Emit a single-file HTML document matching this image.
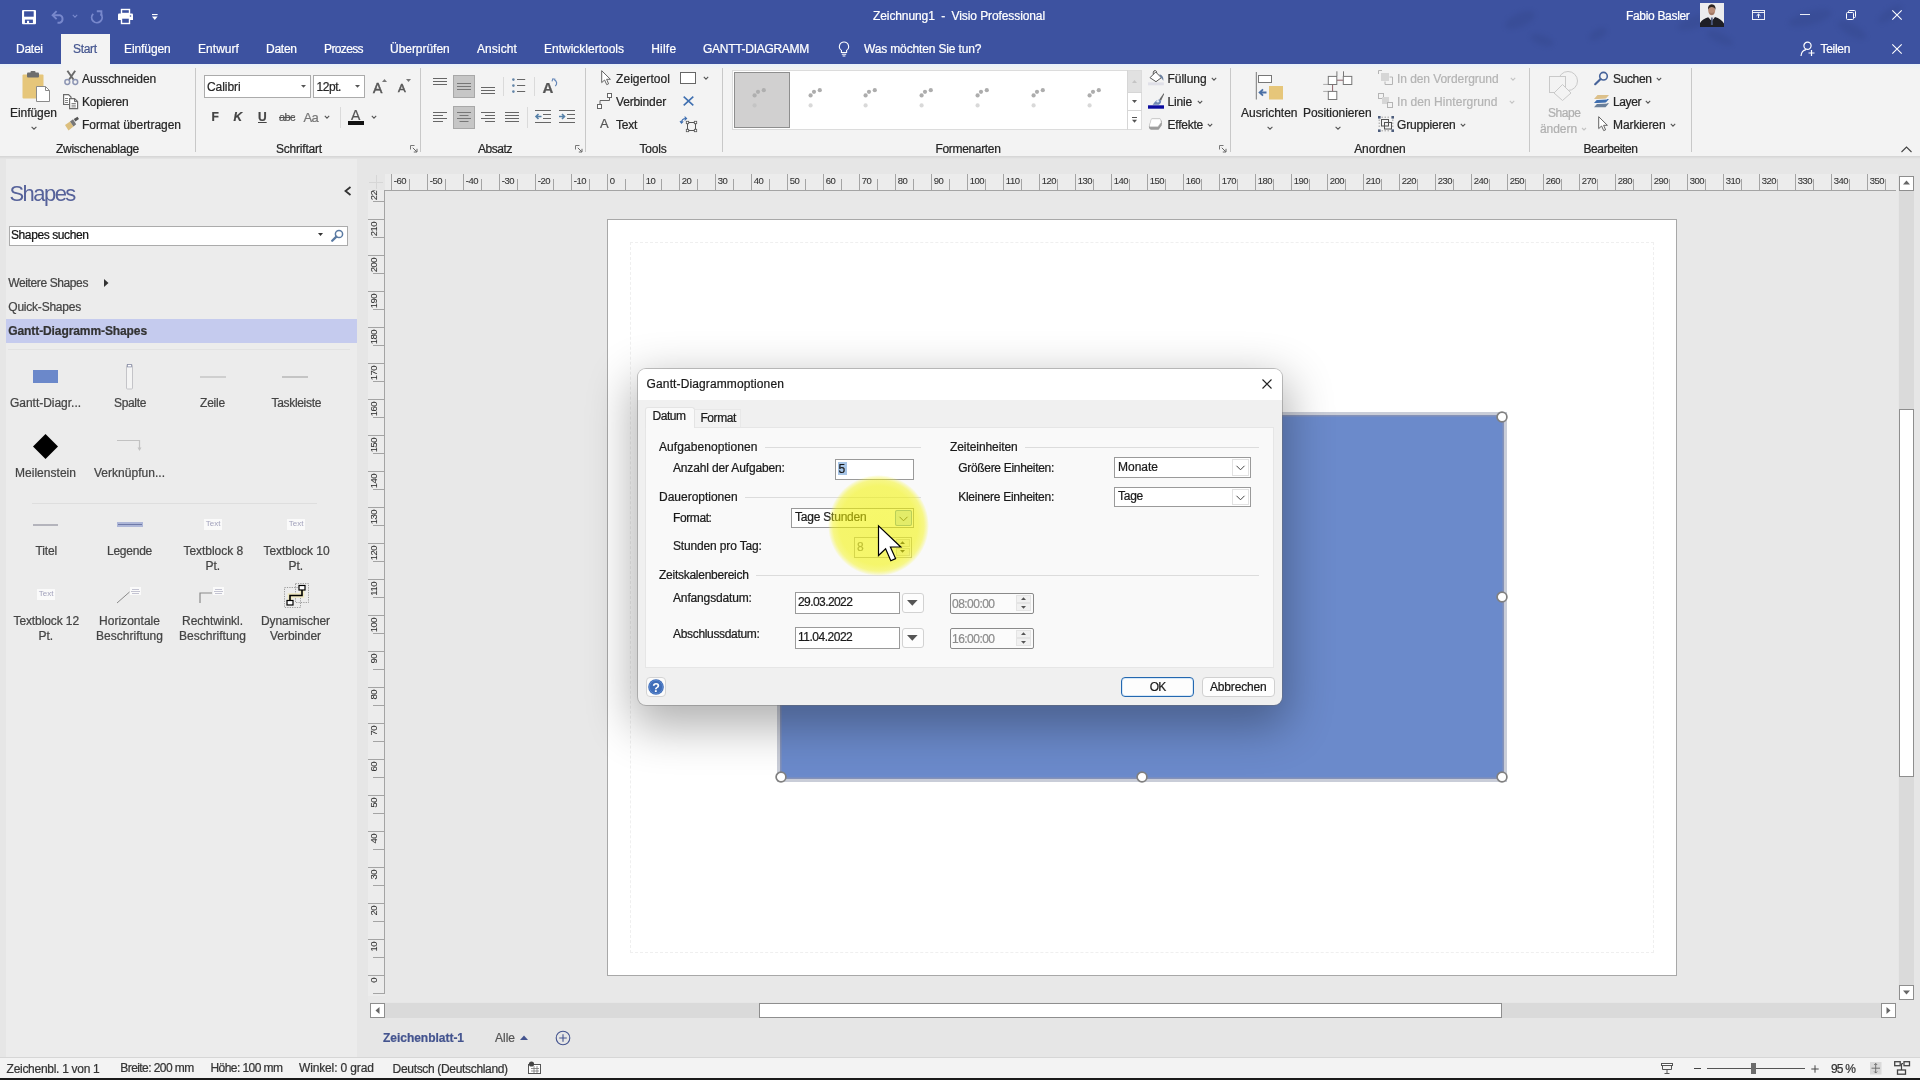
<!DOCTYPE html>
<html><head><meta charset="utf-8"><title>Visio</title>
<style>
html,body{margin:0;padding:0;background:#e6e6e6;}
body{width:1920px;height:1080px;overflow:hidden;position:relative;font-family:"Liberation Sans",sans-serif;}
.a{position:absolute;display:block;}
.t{position:absolute;white-space:pre;display:block;-webkit-text-stroke:0.22px;}
svg{overflow:visible;}
#root{position:absolute;left:0;top:0;width:1920px;height:1080px;overflow:hidden;will-change:transform;}
</style></head><body>
<div id="root">
<div class="a" style="left:0px;top:0px;width:1920px;height:64px;background:#3d52a0;"></div>
<svg class="a" style="left:1480px;top:0px;" width="440" height="64" viewBox="0 0 440 64">
<g fill="#34478c" opacity="0.4" style="filter:blur(2.5px)">
<ellipse cx="40" cy="20" rx="16" ry="7" transform="rotate(-25 40 20)"/>
<ellipse cx="62" cy="40" rx="12" ry="5" transform="rotate(20 62 40)"/>
<ellipse cx="118" cy="34" rx="10" ry="5" transform="rotate(-30 118 34)"/>
<ellipse cx="215" cy="22" rx="18" ry="6" transform="rotate(-20 215 22)"/>
<ellipse cx="240" cy="38" rx="14" ry="5" transform="rotate(25 240 38)"/>
<ellipse cx="330" cy="18" rx="22" ry="7" transform="rotate(-15 330 18)"/>
<ellipse cx="372" cy="30" rx="16" ry="6" transform="rotate(30 372 30)"/>
<ellipse cx="410" cy="14" rx="14" ry="5" transform="rotate(-35 410 14)"/>
</g></svg>
<div class="a" style="left:0px;top:64px;width:1920px;height:92px;background:#f3f3f3;"></div>
<div class="a" style="left:0px;top:64px;width:1920px;height:5px;background:linear-gradient(#e8f0fa,#f3f3f3);"></div>
<div class="a" style="left:61px;top:34px;width:49px;height:36px;background:#f3f3f3;"></div>
<div class="a" style="left:0px;top:156px;width:1920px;height:3px;background:linear-gradient(#d4d4d4,#e6e6e6);"></div>
<svg class="a" style="left:22px;top:10px;" width="14" height="14.5" viewBox="0 0 14 14.5"><rect x="0" y="0" width="14" height="14.200" rx="1" fill="#ffffff"/><rect x="2.1" y="1.300" width="9.600" height="5.400" fill="#3d52a0"/><rect x="2.9" y="9.600" width="8" height="3.400" fill="#3d52a0"/><rect x="5" y="10.800" width="2.100" height="2.2" fill="#ffffff"/></svg>
<svg class="a" style="left:51px;top:10px;" width="15" height="14" viewBox="0 0 15 14"><path d="M2 5.2 H8.800 A4 4 0 0 1 8.8 12.800 H6.5" fill="none" stroke="#7888cc" stroke-width="1.9"/><path d="M5.600 1.200 L1.600 5.2 L5.6 9.200" fill="none" stroke="#7888cc" stroke-width="1.9"/></svg>
<svg class="a" style="left:71px;top:13.0px;" width="8" height="6" viewBox="0 0 8 6"><path d="M1.7999999999999998 1.9 L4 4.1 L6.2 1.9" fill="none" stroke="#7888cc" stroke-width="1.1"/></svg>
<svg class="a" style="left:90px;top:10px;" width="14" height="14" viewBox="0 0 14 14"><path d="M10.800 4 A5.2 5.200 0 1 1 3.200 3.8" fill="none" stroke="#7888cc" stroke-width="1.9"/><path d="M6.800 1.200 H11.4 V5.800" fill="none" stroke="#7888cc" stroke-width="1.9"/></svg>
<svg class="a" style="left:117px;top:8px;" width="17" height="17" viewBox="0 0 17 17"><rect x="4.5" y="1.5" width="8" height="4" fill="none" stroke="#ffffff" stroke-width="1.4"/><path d="M1 6.5 Q1 5.5 2 5.5 H15 Q16 5.5 16 6.5 V12 H1 Z" fill="#ffffff"/><rect x="4.5" y="10" width="8" height="5.5" fill="#3d52a0" stroke="#ffffff" stroke-width="1.4"/><circle cx="13.5" cy="8" r="0.8" fill="#3d52a0"/></svg>
<svg class="a" style="left:151.5px;top:14px;" width="6" height="7" viewBox="0 0 6 7"><rect x="0" y="0" width="5.600" height="1.1" fill="#ffffff"/><path d="M0 2.600 H5.600 L2.800 5.900 Z" fill="#ffffff"/></svg>
<span class="t" style="left:873.0px;top:8.0px;font-size:12px;line-height:16px;color:#fff;letter-spacing:-0.097px;">Zeichnung1  -  Visio Professional</span>
<span class="t" style="left:1626.0px;top:8.0px;font-size:12px;line-height:16px;color:#fff;letter-spacing:-0.322px;">Fabio Basler</span>
<svg class="a" style="left:1700px;top:3px;" width="24" height="24" viewBox="0 0 24 24"><rect width="24" height="24" fill="#ececee"/>
<path d="M0 24 V20 Q2.500 15.800 8.200 14.200 L11.800 18 L15 14 Q21 15.500 24 20.500 V24 Z" fill="#1f1f26"/>
<path d="M9 13.600 L11.800 18.500 L14.400 13.600 Z" fill="#e4e4ea"/>
<path d="M11.200 14.500 H12.600 L13 22 H10.800 Z" fill="#4a5678"/>
<ellipse cx="11.700" cy="7.600" rx="3.500" ry="4.700" fill="#b98d78"/>
<path d="M8 7 Q7.600 1.400 11.800 1.300 Q16 1.400 15.500 7 Q14.600 4 11.800 4 Q9 4 8 7 Z" fill="#2e2622"/>
<path d="M9.200 9 Q11.700 11 14.200 9 L13.800 11 Q11.700 13.200 9.700 11 Z" fill="#8f6a5a" opacity="0.6"/></svg>
<svg class="a" style="left:1752px;top:10px;" width="13" height="10" viewBox="0 0 13 10"><rect x="0.500" y="0.500" width="12" height="9" fill="none" stroke="#ffffff" stroke-width="1" opacity="0.900"/><path d="M0.500 2.500 H12.500" stroke="#ffffff" stroke-width="1" opacity="0.900"/><path d="M6.500 8 V4.200 M4.600 5.800 L6.500 4 L8.400 5.800" fill="none" stroke="#ffffff" stroke-width="1"/></svg>
<div class="a" style="left:1800px;top:14px;width:10px;height:1px;background:rgba(255,255,255,0.9);"></div>
<svg class="a" style="left:1846px;top:10px;" width="10" height="10" viewBox="0 0 10 10"><rect x="0.500" y="2.500" width="7" height="7" rx="1" fill="none" stroke="#ffffff" stroke-width="1"/><path d="M2.500 2.500 V1.500 Q2.500 0.500 3.500 0.500 H8.500 Q9.500 0.500 9.500 1.500 V6.500 Q9.500 7.500 8.500 7.500 H7.500" fill="none" stroke="#ffffff" stroke-width="1"/></svg>
<svg class="a" style="left:1892px;top:10px;" width="10" height="10" viewBox="0 0 10 10"><path d="M0.300 0.300 L9.700 9.700 M9.700 0.300 L0.300 9.700" stroke="#ffffff" stroke-width="1.100"/></svg>
<svg class="a" style="left:1892px;top:43.5px;" width="10" height="10" viewBox="0 0 10 10"><path d="M0.300 0.300 L9.700 9.700 M9.700 0.300 L0.300 9.700" stroke="#ffffff" stroke-width="1.100"/></svg>
<svg class="a" style="left:1800px;top:41px;" width="16" height="16" viewBox="0 0 16 16"><circle cx="7.5" cy="4.8" r="3.6" fill="none" stroke="#ffffff" stroke-width="1.2"/><path d="M1 15 Q1.5 9.5 6 8.6" fill="none" stroke="#ffffff" stroke-width="1.2"/><path d="M11.5 9 V15 M8.5 12 H14.5" stroke="#ffffff" stroke-width="1.2"/></svg>
<span class="t" style="left:1820.5px;top:41.0px;font-size:12px;line-height:16px;color:#fff;letter-spacing:-0.309px;">Teilen</span>
<div class="a" style="left:61px;top:34px;width:49px;height:30px;background:#f3f3f3;"></div>
<span class="t" style="left:16.0px;top:41.0px;font-size:12px;line-height:16px;color:#fff;letter-spacing:-0.263px;">Datei</span>
<span class="t" style="left:73.0px;top:41.0px;font-size:12px;line-height:16px;color:#44558f;letter-spacing:-0.328px;">Start</span>
<span class="t" style="left:124.0px;top:41.0px;font-size:12px;line-height:16px;color:#fff;letter-spacing:-0.084px;">Einfügen</span>
<span class="t" style="left:198.0px;top:41.0px;font-size:12px;line-height:16px;color:#fff;letter-spacing:0.045px;">Entwurf</span>
<span class="t" style="left:266.0px;top:41.0px;font-size:12px;line-height:16px;color:#fff;letter-spacing:-0.264px;">Daten</span>
<span class="t" style="left:324.0px;top:41.0px;font-size:12px;line-height:16px;color:#fff;letter-spacing:-0.621px;">Prozess</span>
<span class="t" style="left:390.0px;top:41.0px;font-size:12px;line-height:16px;color:#fff;letter-spacing:-0.034px;">Überprüfen</span>
<span class="t" style="left:477.0px;top:41.0px;font-size:12px;line-height:16px;color:#fff;letter-spacing:0.093px;">Ansicht</span>
<span class="t" style="left:544.0px;top:41.0px;font-size:12px;line-height:16px;color:#fff;letter-spacing:-0.002px;">Entwicklertools</span>
<span class="t" style="left:651.2px;top:41.0px;font-size:12px;line-height:16px;color:#fff;letter-spacing:0.219px;">Hilfe</span>
<span class="t" style="left:703.0px;top:41.0px;font-size:12px;line-height:16px;color:#fff;letter-spacing:-0.286px;">GANTT-DIAGRAMM</span>
<span class="t" style="left:864.0px;top:41.0px;font-size:12px;line-height:16px;color:#fff;letter-spacing:-0.154px;">Was möchten Sie tun?</span>
<svg class="a" style="left:838px;top:41px;" width="12" height="16" viewBox="0 0 12 16"><path d="M6 1 A4.6 4.6 0 0 1 8.6 9.4 V11.5 H3.4 V9.4 A4.6 4.6 0 0 1 6 1 Z" fill="none" stroke="#ffffff" stroke-width="1.1"/><path d="M3.8 13.3 H8.2 M4.6 15 H7.4" stroke="#ffffff" stroke-width="1.1"/></svg>
<svg class="a" style="left:22px;top:71px;" width="29" height="31" viewBox="0 0 29 31"><rect x="0.5" y="3.5" width="21" height="24" rx="1" fill="#e6c67a"/>
<rect x="5" y="1.5" width="12" height="5" rx="1" fill="#6e6e6e"/><rect x="8.5" y="0" width="5" height="3" rx="1" fill="#6e6e6e"/>
<path d="M14.5 15.5 H23.5 L27.5 19.5 V30.5 H14.5 Z" fill="#fff" stroke="#8a8a8a" stroke-width="1"/>
<path d="M23.5 15.5 V19.5 H27.5" fill="none" stroke="#8a8a8a" stroke-width="1"/></svg>
<span class="t" style="left:10.0px;top:104.7px;font-size:12px;line-height:16px;color:#262626;letter-spacing:-0.047px;">Einfügen</span>
<svg class="a" style="left:30px;top:125.0px;" width="8" height="6" viewBox="0 0 8 6"><path d="M1.6 1.8 L4 4.2 L6.4 1.8" fill="none" stroke="#555" stroke-width="1.1"/></svg>
<svg class="a" style="left:64px;top:70px;" width="15" height="15" viewBox="0 0 15 15"><path d="M3.400 0.800 L9.800 10 M11.200 0.800 L4.800 10" stroke="#6a6a6a" stroke-width="1.900" fill="none"/>
<circle cx="3.300" cy="12" r="2.400" fill="none" stroke="#8d96b4" stroke-width="1.500"/><circle cx="11.300" cy="12" r="2.400" fill="none" stroke="#8d96b4" stroke-width="1.500"/></svg>
<span class="t" style="left:82.0px;top:70.5px;font-size:12px;line-height:16px;color:#262626;letter-spacing:-0.116px;">Ausschneiden</span>
<svg class="a" style="left:63px;top:94px;" width="16" height="16" viewBox="0 0 16 16"><path d="M0.600 0.600 H5.500 L8 3 V10.500 H0.600 Z" fill="#fff" stroke="#6a6a6a" stroke-width="1.200"/>
<path d="M2 4.500 H5 M2 6.500 H5 M2 8.500 H5" stroke="#777" stroke-width="0.900"/>
<path d="M6.600 4.600 H11.500 L14.600 7.600 V14.600 H6.600 Z" fill="#fff" stroke="#6a6a6a" stroke-width="1.200"/><path d="M11.500 4.600 V7.600 H14.600" fill="none" stroke="#6a6a6a" stroke-width="1"/>
<path d="M8.500 9.500 H12.800 M8.500 11.200 H12.800 M8.500 12.900 H12.800" stroke="#777" stroke-width="0.900"/></svg>
<span class="t" style="left:82.0px;top:93.5px;font-size:12px;line-height:16px;color:#262626;letter-spacing:-0.192px;">Kopieren</span>
<svg class="a" style="left:64px;top:116px;" width="16" height="16" viewBox="0 0 16 16"><path d="M1 9 L6 5.5 L9.5 10.5 L4.5 14.5 Z" fill="#dcbf7e"/>
<path d="M6 5.5 L9 3.3 L12.2 8.3 L9.5 10.5 Z" fill="#777"/><path d="M9.8 3 L13.5 0.8 L15 3 L11.3 5.6 Z" fill="#555"/></svg>
<span class="t" style="left:82.0px;top:117.0px;font-size:12px;line-height:16px;color:#262626;letter-spacing:-0.022px;">Format übertragen</span>
<span class="t" style="left:56.0px;top:140.5px;font-size:12px;line-height:16px;color:#262626;letter-spacing:-0.266px;">Zwischenablage</span>
<div class="a" style="left:195px;top:68px;width:1px;height:84px;background:#c8c8c8;"></div>
<div class="a" style="left:204px;top:75px;width:107px;height:23px;background:#fff;border:1px solid #ababab;box-sizing:border-box;"></div>
<span class="t" style="left:207.0px;top:79.0px;font-size:12px;line-height:16px;color:#262626;letter-spacing:-0.073px;">Calibri</span>
<svg class="a" style="left:300.8px;top:85.3px;" width="5" height="3" viewBox="0 0 5 3"><path d="M0 0 H5 L2.500 2.800 Z" fill="#555"/></svg>
<div class="a" style="left:313px;top:75px;width:52px;height:23px;background:#fff;border:1px solid #ababab;box-sizing:border-box;"></div>
<span class="t" style="left:316.5px;top:79.0px;font-size:12px;line-height:16px;color:#262626;letter-spacing:-0.438px;">12pt.</span>
<svg class="a" style="left:355.1px;top:85.3px;" width="5" height="3" viewBox="0 0 5 3"><path d="M0 0 H5 L2.500 2.800 Z" fill="#555"/></svg>
<span class="t" style="left:373.0px;top:78.5px;font-size:14px;line-height:18px;color:#555;-webkit-text-stroke:0.500px;">A</span>
<svg class="a" style="left:382px;top:79px;" width="5" height="3" viewBox="0 0 5 3"><path d="M0 3 H5 L2.5 0 Z" fill="#777"/></svg>
<span class="t" style="left:398.0px;top:80.8px;font-size:11.5px;line-height:15.5px;color:#555;-webkit-text-stroke:0.500px;">A</span>
<svg class="a" style="left:406px;top:79px;" width="5" height="3" viewBox="0 0 5 3"><path d="M0 0 H5 L2.5 3 Z" fill="#777"/></svg>
<span class="t" style="left:211.5px;top:109.0px;font-size:12px;line-height:16px;color:#444;font-weight:bold;">F</span>
<span class="t" style="left:233.5px;top:109.0px;font-size:12px;line-height:16px;color:#444;font-weight:bold;font-style:italic;">K</span>
<span class="t" style="left:258.0px;top:109.0px;font-size:12px;line-height:16px;color:#444;font-weight:bold;text-decoration:underline;">U</span>
<span class="t" style="left:279.0px;top:109.5px;font-size:11px;line-height:15px;color:#555;letter-spacing:-0.578px;text-decoration:line-through;">abc</span>
<span class="t" style="left:303.5px;top:108.5px;font-size:13px;line-height:17px;color:#777;letter-spacing:-0.701px;">Aa</span>
<svg class="a" style="left:323px;top:114.0px;" width="8" height="6" viewBox="0 0 8 6"><path d="M1.7999999999999998 1.9 L4 4.1 L6.2 1.9" fill="none" stroke="#555" stroke-width="1.1"/></svg>
<div class="a" style="left:340px;top:107px;width:1px;height:21px;background:#dadada;"></div>
<span class="t" style="left:351.0px;top:106.0px;font-size:14px;line-height:18px;color:#555;">A</span>
<div class="a" style="left:348px;top:121px;width:16px;height:4px;background:#111;"></div>
<svg class="a" style="left:370px;top:114.0px;" width="8" height="6" viewBox="0 0 8 6"><path d="M1.7999999999999998 1.9 L4 4.1 L6.2 1.9" fill="none" stroke="#555" stroke-width="1.1"/></svg>
<span class="t" style="left:276.0px;top:140.5px;font-size:12px;line-height:16px;color:#262626;letter-spacing:-0.201px;">Schriftart</span>
<svg class="a" style="left:409.5px;top:144.5px;" width="8" height="8" viewBox="0 0 8 8"><path d="M0.500 4.500 V0.500 H4.500" fill="none" stroke="#777" stroke-width="1"/><path d="M2.800 2.800 L6.800 6.800 M7 3.800 V7 H3.800" fill="none" stroke="#666" stroke-width="1"/></svg>
<div class="a" style="left:420px;top:68px;width:1px;height:84px;background:#c8c8c8;"></div>
<svg class="a" style="left:433px;top:78px;" width="14" height="7" viewBox="0 0 14 7"><path d="M0.0 0.5 H14.0 M0.0 3.5 H14.0 M0.0 6.5 H14.0 " stroke="#666" stroke-width="1" fill="none"/></svg>
<div class="a" style="left:453px;top:75px;width:22px;height:23px;background:#c6c6c6;border:1px solid #a8a8a8;box-sizing:border-box;"></div>
<svg class="a" style="left:457px;top:83px;" width="14" height="7" viewBox="0 0 14 7"><path d="M0.0 0.5 H14.0 M0.0 3.5 H14.0 M0.0 6.5 H14.0 " stroke="#777" stroke-width="1" fill="none"/></svg>
<svg class="a" style="left:481px;top:87px;" width="14" height="7" viewBox="0 0 14 7"><path d="M0.0 0.5 H14.0 M0.0 3.5 H14.0 M0.0 6.5 H14.0 " stroke="#666" stroke-width="1" fill="none"/></svg>
<div class="a" style="left:503px;top:77px;width:1px;height:19px;background:#dadada;"></div>
<svg class="a" style="left:511px;top:79px;" width="15" height="14" viewBox="0 0 15 14"><path d="M6 0.500 H14.200 M6 6.500 H14.200 M6 12.500 H14.200" stroke="#666" stroke-width="1"/><circle cx="2.400" cy="0.600" r="1.300" fill="#6486a8"/><circle cx="2.400" cy="6.600" r="1.300" fill="#6486a8"/><circle cx="2.400" cy="12.600" r="1.300" fill="#6486a8"/></svg>
<div class="a" style="left:534px;top:77px;width:1px;height:19px;background:#dadada;"></div>
<span class="t" style="left:542.5px;top:78.0px;font-size:15px;line-height:19px;color:#555;font-weight:bold;">A</span>
<svg class="a" style="left:551px;top:78px;" width="7" height="9" viewBox="0 0 7 9"><path d="M4.300 8.200 Q7.600 4.200 3 1.600" fill="none" stroke="#6486b8" stroke-width="1.200"/><path d="M1 3.300 L1.800 0.800 L4.400 1.300" fill="none" stroke="#6486b8" stroke-width="1.100"/></svg>
<svg class="a" style="left:433px;top:112px;" width="14" height="10" viewBox="0 0 14 10"><path d="M0 0.5 H14 M0 3.5 H10 M0 6.5 H14 M0 9.5 H10 " stroke="#666" stroke-width="1" fill="none"/></svg>
<div class="a" style="left:453px;top:106px;width:22px;height:23px;background:#c6c6c6;border:1px solid #a8a8a8;box-sizing:border-box;"></div>
<svg class="a" style="left:457px;top:112px;" width="14" height="10" viewBox="0 0 14 10"><path d="M0.0 0.5 H14.0 M2.5 3.5 H11.5 M0.0 6.5 H14.0 M2.5 9.5 H11.5 " stroke="#777" stroke-width="1" fill="none"/></svg>
<svg class="a" style="left:481px;top:112px;" width="14" height="10" viewBox="0 0 14 10"><path d="M0 0.5 H14 M4 3.5 H14 M0 6.5 H14 M4 9.5 H14 " stroke="#666" stroke-width="1" fill="none"/></svg>
<svg class="a" style="left:505px;top:112px;" width="14" height="10" viewBox="0 0 14 10"><path d="M0.0 0.5 H14.0 M0.0 3.5 H14.0 M0.0 6.5 H14.0 M0.0 9.5 H14.0 " stroke="#666" stroke-width="1" fill="none"/></svg>
<div class="a" style="left:527px;top:107px;width:1px;height:21px;background:#dadada;"></div>
<svg class="a" style="left:535px;top:110px;" width="16" height="14" viewBox="0 0 16 14"><path d="M0 0.5 H16 M8 4.5 H16 M8 8.5 H16 M0 12.5 H16" stroke="#666" stroke-width="1"/><path d="M6.5 6.5 H1 M3.5 4 L1 6.5 L3.5 9" fill="none" stroke="#5580a8" stroke-width="1.600"/></svg>
<svg class="a" style="left:559px;top:110px;" width="16" height="14" viewBox="0 0 16 14"><path d="M0 0.5 H16 M8 4.5 H16 M8 8.5 H16 M0 12.5 H16" stroke="#666" stroke-width="1"/><path d="M0 6.5 H5.5 M3 4 L5.5 6.5 L3 9" fill="none" stroke="#5580a8" stroke-width="1.600"/></svg>
<span class="t" style="left:478.0px;top:140.5px;font-size:12px;line-height:16px;color:#262626;letter-spacing:-0.448px;">Absatz</span>
<svg class="a" style="left:574.5px;top:144.5px;" width="8" height="8" viewBox="0 0 8 8"><path d="M0.500 4.500 V0.500 H4.500" fill="none" stroke="#777" stroke-width="1"/><path d="M2.800 2.800 L6.800 6.800 M7 3.800 V7 H3.800" fill="none" stroke="#666" stroke-width="1"/></svg>
<div class="a" style="left:585px;top:68px;width:1px;height:84px;background:#c8c8c8;"></div>
<svg class="a" style="left:601px;top:70px;" width="10.0" height="16.0" viewBox="0 0 10 16"><path d="M0.7 0.7 V12.6 L3.6 10 L5.7 14.6 L7.6 13.8 L5.6 9.3 H9.4 Z" fill="#fff" stroke="#555" stroke-width="0.9" stroke-linejoin="round"/></svg>
<span class="t" style="left:616.0px;top:70.5px;font-size:12px;line-height:16px;color:#262626;letter-spacing:0.064px;">Zeigertool</span>
<div class="a" style="left:680px;top:72px;width:16px;height:12px;background:#fff;border:1px solid #666;box-sizing:border-box;"></div>
<svg class="a" style="left:702px;top:75.0px;" width="8" height="6" viewBox="0 0 8 6"><path d="M1.7999999999999998 1.9 L4 4.1 L6.2 1.9" fill="none" stroke="#555" stroke-width="1.1"/></svg>
<svg class="a" style="left:597px;top:93px;" width="16" height="16" viewBox="0 0 16 16"><path d="M3 11 V7.5 H12.5 V4.5" fill="none" stroke="#666" stroke-width="1"/><rect x="0.5" y="11.5" width="4" height="4" fill="#fff" stroke="#666"/><rect x="10.5" y="0.5" width="4" height="4" fill="#fff" stroke="#666"/></svg>
<span class="t" style="left:616.0px;top:93.5px;font-size:12px;line-height:16px;color:#262626;letter-spacing:-0.152px;">Verbinder</span>
<svg class="a" style="left:683px;top:96px;" width="11" height="10" viewBox="0 0 11 10"><path d="M0.7 0.7 L10.3 9.3 M10.3 0.7 L0.7 9.3" stroke="#3f6fb0" stroke-width="1.6"/></svg>
<span class="t" style="left:600.0px;top:115.0px;font-size:13px;line-height:17px;color:#555;">A</span>
<span class="t" style="left:616.0px;top:117.0px;font-size:12px;line-height:16px;color:#262626;letter-spacing:-0.252px;">Text</span>
<svg class="a" style="left:680px;top:116px;" width="17" height="16" viewBox="0 0 17 16"><rect x="7.5" y="6.5" width="8" height="8" fill="none" stroke="#555" stroke-width="1"/><rect x="6.3" y="5.3" width="2.4" height="2.4" fill="#fff" stroke="#555" stroke-width="0.8"/><rect x="14.3" y="5.3" width="2.4" height="2.4" fill="#fff" stroke="#555" stroke-width="0.8"/><rect x="6.3" y="13.3" width="2.4" height="2.4" fill="#fff" stroke="#555" stroke-width="0.8"/><rect x="14.3" y="13.3" width="2.4" height="2.4" fill="#fff" stroke="#555" stroke-width="0.8"/><path d="M1.5 7 Q1.5 2.5 6 2.5" fill="none" stroke="#3f6fb0" stroke-width="1.2"/><path d="M4.6 0.6 L6.6 2.5 L4.6 4.4" fill="none" stroke="#3f6fb0" stroke-width="1.1"/><path d="M0 5.2 L1.5 7.2 L3.2 5.4" fill="none" stroke="#3f6fb0" stroke-width="1.1"/></svg>
<span class="t" style="left:639.5px;top:140.5px;font-size:12px;line-height:16px;color:#262626;letter-spacing:-0.203px;">Tools</span>
<div class="a" style="left:722px;top:68px;width:1px;height:84px;background:#c8c8c8;"></div>
<div class="a" style="left:732px;top:70px;width:410px;height:60px;background:#fff;border:1px solid #dcdcdc;box-sizing:border-box;"></div>
<div class="a" style="left:734px;top:72px;width:56px;height:56px;background:#d1d0d0;border:1px solid #8e8e8e;box-sizing:border-box;"></div>
<svg class="a" style="left:751.5px;top:86px;" width="16" height="22" viewBox="0 0 16 22"><circle cx="2.600" cy="9.4" r="2.100" fill="#afafaf"/><circle cx="6" cy="5.800" r="2.100" fill="#afafaf"/><circle cx="11.800" cy="4.200" r="2.100" fill="#afafaf"/><circle cx="2.600" cy="19.400" r="2.100" fill="#c4c4c4"/></svg>
<svg class="a" style="left:807.5px;top:86px;" width="16" height="22" viewBox="0 0 16 22"><circle cx="2.600" cy="9.4" r="2.100" fill="#adadad"/><circle cx="6" cy="5.800" r="2.100" fill="#adadad"/><circle cx="11.800" cy="4.200" r="2.100" fill="#adadad"/><circle cx="2.600" cy="19.400" r="2.100" fill="#d9d9d9"/></svg>
<svg class="a" style="left:863px;top:86px;" width="16" height="22" viewBox="0 0 16 22"><circle cx="2.600" cy="9.4" r="2.100" fill="#adadad"/><circle cx="6" cy="5.800" r="2.100" fill="#adadad"/><circle cx="11.800" cy="4.200" r="2.100" fill="#adadad"/><circle cx="2.600" cy="19.400" r="2.100" fill="#d9d9d9"/></svg>
<svg class="a" style="left:919px;top:86px;" width="16" height="22" viewBox="0 0 16 22"><circle cx="2.600" cy="9.4" r="2.100" fill="#adadad"/><circle cx="6" cy="5.800" r="2.100" fill="#adadad"/><circle cx="11.800" cy="4.200" r="2.100" fill="#adadad"/><circle cx="2.600" cy="19.400" r="2.100" fill="#d9d9d9"/></svg>
<svg class="a" style="left:974.5px;top:86px;" width="16" height="22" viewBox="0 0 16 22"><circle cx="2.600" cy="9.4" r="2.100" fill="#adadad"/><circle cx="6" cy="5.800" r="2.100" fill="#adadad"/><circle cx="11.800" cy="4.200" r="2.100" fill="#adadad"/><circle cx="2.600" cy="19.400" r="2.100" fill="#d9d9d9"/></svg>
<svg class="a" style="left:1030.5px;top:86px;" width="16" height="22" viewBox="0 0 16 22"><circle cx="2.600" cy="9.4" r="2.100" fill="#adadad"/><circle cx="6" cy="5.800" r="2.100" fill="#adadad"/><circle cx="11.800" cy="4.200" r="2.100" fill="#adadad"/><circle cx="2.600" cy="19.400" r="2.100" fill="#d9d9d9"/></svg>
<svg class="a" style="left:1086.5px;top:86px;" width="16" height="22" viewBox="0 0 16 22"><circle cx="2.600" cy="9.4" r="2.100" fill="#adadad"/><circle cx="6" cy="5.800" r="2.100" fill="#adadad"/><circle cx="11.800" cy="4.200" r="2.100" fill="#adadad"/><circle cx="2.600" cy="19.400" r="2.100" fill="#d9d9d9"/></svg>
<div class="a" style="left:1127px;top:71px;width:14px;height:22px;background:#e1e1e1;"></div>
<div class="a" style="left:1127px;top:70px;width:1px;height:60px;background:#d6d6d6;"></div>
<div class="a" style="left:1127px;top:92px;width:15px;height:1px;background:#d6d6d6;"></div>
<div class="a" style="left:1127px;top:110px;width:15px;height:1px;background:#d6d6d6;"></div>
<svg class="a" style="left:1132px;top:80px;" width="5" height="3" viewBox="0 0 5 3"><path d="M0 3 H5 L2.5 0 Z" fill="#c4c4c4"/></svg>
<svg class="a" style="left:1132px;top:100px;" width="5" height="3" viewBox="0 0 5 3"><path d="M0 0 H5 L2.5 3 Z" fill="#555"/></svg>
<svg class="a" style="left:1132px;top:117px;" width="5" height="6" viewBox="0 0 5 6"><path d="M0 0.5 H5" stroke="#555" stroke-width="1"/><path d="M0 2.8 H5 L2.5 5.8 Z" fill="#555"/></svg>
<svg class="a" style="left:1148px;top:69px;" width="17" height="17" viewBox="0 0 17 17"><path d="M2 8.700 L7.700 3 L13.300 8.700 L8 12.700 Z" fill="#fff" stroke="#555" stroke-width="1"/><path d="M5.300 5.400 V3.200 Q5.600 1.400 7.400 1.600 Q8.800 1.900 8.700 3.800" fill="none" stroke="#555" stroke-width="1"/><path d="M11.400 5.200 Q15.800 6.200 15.400 11.800 Q13.400 8.800 12.300 7.900 Z" fill="#6a7f9f"/><rect x="0" y="13.400" width="15.800" height="2.900" fill="#e0e0e8"/></svg>
<span class="t" style="left:1167.5px;top:70.5px;font-size:12px;line-height:16px;color:#262626;letter-spacing:-0.051px;">Füllung</span>
<svg class="a" style="left:1210px;top:75.5px;" width="8" height="6" viewBox="0 0 8 6"><path d="M1.7999999999999998 1.9 L4 4.1 L6.2 1.9" fill="none" stroke="#555" stroke-width="1.1"/></svg>
<svg class="a" style="left:1148px;top:92px;" width="17" height="17" viewBox="0 0 17 17"><path d="M15.800 0.900 L11.300 7.600 L13 8.800 L16 2.600 Z" fill="#686868"/><path d="M11.300 7.400 Q8.400 7.600 6.800 10 L4.600 12.800 H11 Q13.600 10.800 13.200 8.700 Z" fill="#6f88b4"/><circle cx="9.800" cy="9.300" r="1.300" fill="#dfe8f6"/><rect x="0" y="13.300" width="16" height="3.400" fill="#0a0a9e"/></svg>
<span class="t" style="left:1167.5px;top:94.0px;font-size:12px;line-height:16px;color:#262626;letter-spacing:-0.171px;">Linie</span>
<svg class="a" style="left:1195.5px;top:99.0px;" width="8" height="6" viewBox="0 0 8 6"><path d="M1.7999999999999998 1.9 L4 4.1 L6.2 1.9" fill="none" stroke="#555" stroke-width="1.1"/></svg>
<svg class="a" style="left:1148px;top:117px;" width="17" height="15" viewBox="0 0 17 15"><path d="M1 9.200 L3 2.400 Q3.300 1.500 4.300 1.500 H12 Q14.800 4 13.600 8.600 L11 12.300 Q10.600 12.800 9.800 12.800 H3 Q0.600 12 1 9.200 Z" fill="#9c9c9c"/><path d="M3.200 2.600 Q3.500 1.800 4.400 1.800 H11.400 Q12.400 1.800 12.700 2.800 L13.100 5.200 L10.300 9.200 Q9.900 9.700 9.200 9.700 H2.400 Q1.200 9.500 1.500 8.400 Z" fill="#fff" stroke="#c4c4c4" stroke-width="0.500"/></svg>
<span class="t" style="left:1167.5px;top:116.5px;font-size:12px;line-height:16px;color:#262626;letter-spacing:-0.234px;">Effekte</span>
<svg class="a" style="left:1206px;top:121.5px;" width="8" height="6" viewBox="0 0 8 6"><path d="M1.7999999999999998 1.9 L4 4.1 L6.2 1.9" fill="none" stroke="#555" stroke-width="1.1"/></svg>
<span class="t" style="left:935.5px;top:140.5px;font-size:12px;line-height:16px;color:#262626;letter-spacing:-0.336px;">Formenarten</span>
<svg class="a" style="left:1219.0px;top:144.5px;" width="8" height="8" viewBox="0 0 8 8"><path d="M0.500 4.500 V0.500 H4.500" fill="none" stroke="#777" stroke-width="1"/><path d="M2.800 2.800 L6.800 6.800 M7 3.800 V7 H3.800" fill="none" stroke="#666" stroke-width="1"/></svg>
<div class="a" style="left:1230px;top:68px;width:1px;height:84px;background:#c8c8c8;"></div>
<svg class="a" style="left:1255px;top:72px;" width="29" height="28" viewBox="0 0 29 28"><path d="M1.300 0 V27.500" stroke="#777" stroke-width="1"/>
<rect x="3.5" y="3.5" width="13" height="7" fill="#fff" stroke="#777" stroke-width="1"/>
<rect x="14" y="14" width="14" height="13.5" fill="#e6c67a"/>
<path d="M11.5 20.5 H5 M8 17.3 L4.6 20.5 L8 23.7" fill="none" stroke="#4a6fa5" stroke-width="1.8"/></svg>
<span class="t" style="left:1241.0px;top:105.0px;font-size:12px;line-height:16px;color:#262626;letter-spacing:-0.020px;">Ausrichten</span>
<svg class="a" style="left:1266px;top:125.0px;" width="8" height="6" viewBox="0 0 8 6"><path d="M1.6 1.8 L4 4.2 L6.4 1.8" fill="none" stroke="#555" stroke-width="1.1"/></svg>
<svg class="a" style="left:1323px;top:72px;" width="30" height="29" viewBox="0 0 30 29"><path d="M13.900 -0.700 V4 M20.500 -0.700 V4" stroke="#777" stroke-width="1" fill="none"/>
<path d="M14 8.200 H20.500 M9.600 12.500 V19.500" stroke="#8f5f68" stroke-width="1" fill="none"/>
<path d="M0.200 12.400 H5 M0.200 19.400 H5" stroke="#a9a9a9" stroke-width="1"/>
<rect x="5.300" y="4.400" width="8.500" height="8.100" fill="#fff" stroke="#777"/><rect x="20.300" y="4.400" width="8.500" height="8.100" fill="#fff" stroke="#777"/><rect x="5.300" y="19.400" width="8.500" height="8.100" fill="#fff" stroke="#777"/></svg>
<span class="t" style="left:1303.0px;top:105.0px;font-size:12px;line-height:16px;color:#262626;letter-spacing:-0.067px;">Positionieren</span>
<svg class="a" style="left:1334px;top:125.0px;" width="8" height="6" viewBox="0 0 8 6"><path d="M1.6 1.8 L4 4.2 L6.4 1.8" fill="none" stroke="#555" stroke-width="1.1"/></svg>
<svg class="a" style="left:1378px;top:70px;" width="16" height="16" viewBox="0 0 16 16"><path d="M0.5 4 V0.5 H4" fill="none" stroke="#b4b4b4"/><rect x="3" y="3" width="8" height="8" fill="#d6d6d6"/><path d="M11.5 7 H14.5 V14.5 H7 V11.5" fill="none" stroke="#b4b4b4"/></svg>
<span class="t" style="left:1397.0px;top:70.5px;font-size:12px;line-height:16px;color:#b4b4b4;letter-spacing:-0.069px;">In den Vordergrund</span>
<svg class="a" style="left:1509px;top:75.5px;" width="8" height="6" viewBox="0 0 8 6"><path d="M1.7999999999999998 1.9 L4 4.1 L6.2 1.9" fill="none" stroke="#c4c4c4" stroke-width="1.1"/></svg>
<svg class="a" style="left:1378px;top:93px;" width="16" height="16" viewBox="0 0 16 16"><rect x="0.5" y="0.5" width="5" height="5" fill="none" stroke="#b4b4b4"/><rect x="4" y="4" width="7" height="7" fill="#d6d6d6"/><rect x="9.500" y="9.500" width="5" height="5" fill="#f3f3f3" stroke="#b4b4b4"/></svg>
<span class="t" style="left:1397.0px;top:94.0px;font-size:12px;line-height:16px;color:#b4b4b4;letter-spacing:0.061px;">In den Hintergrund</span>
<svg class="a" style="left:1508px;top:99.0px;" width="8" height="6" viewBox="0 0 8 6"><path d="M1.7999999999999998 1.9 L4 4.1 L6.2 1.9" fill="none" stroke="#c4c4c4" stroke-width="1.1"/></svg>
<svg class="a" style="left:1378px;top:116px;" width="17" height="16" viewBox="0 0 17 16"><path d="M3.500 1.200 H12.500 M3.500 14.800 H12.500 M1.200 3.500 V12.500 M14.800 3.500 V12.500" stroke="#8a8a8a" stroke-width="0.800" stroke-dasharray="1.500 1.500"/>
<rect x="3.500" y="3.500" width="7" height="6.500" fill="none" stroke="#555"/><rect x="6.500" y="6.500" width="7" height="6.500" fill="none" stroke="#555"/>
<g fill="#4d5d7c"><rect x="0" y="0" width="2.600" height="2.600"/><rect x="13.400" y="0" width="2.600" height="2.600"/><rect x="0" y="13.400" width="2.600" height="2.600"/><rect x="13.400" y="13.400" width="2.600" height="2.600"/></g></svg>
<span class="t" style="left:1397.0px;top:116.5px;font-size:12px;line-height:16px;color:#262626;letter-spacing:-0.154px;">Gruppieren</span>
<svg class="a" style="left:1459px;top:121.5px;" width="8" height="6" viewBox="0 0 8 6"><path d="M1.7999999999999998 1.9 L4 4.1 L6.2 1.9" fill="none" stroke="#555" stroke-width="1.1"/></svg>
<span class="t" style="left:1354.2px;top:140.5px;font-size:12px;line-height:16px;color:#262626;letter-spacing:-0.068px;">Anordnen</span>
<div class="a" style="left:1529px;top:68px;width:1px;height:84px;background:#c8c8c8;"></div>
<svg class="a" style="left:1548px;top:71px;" width="31" height="30" viewBox="0 0 31 30"><circle cx="20" cy="10" r="9.5" fill="none" stroke="#c9c9c9"/><rect x="1.5" y="5.5" width="16" height="16" fill="#f3f3f3" stroke="#c9c9c9"/><path d="M14.5 13.5 L23 22 L14.5 29.5 L6 22 Z" fill="#f3f3f3" stroke="#c9c9c9"/></svg>
<span class="t" style="left:1548.0px;top:105.0px;font-size:12px;line-height:16px;color:#b0b0b0;letter-spacing:-0.440px;">Shape</span>
<span class="t" style="left:1540.0px;top:120.5px;font-size:12px;line-height:16px;color:#b0b0b0;letter-spacing:-0.061px;">ändern</span>
<svg class="a" style="left:1580px;top:125.5px;" width="8" height="6" viewBox="0 0 8 6"><path d="M2 2.0 L4 4.0 L6 2.0" fill="none" stroke="#c4c4c4" stroke-width="1.1"/></svg>
<svg class="a" style="left:1594px;top:71px;" width="15" height="15" viewBox="0 0 15 15"><circle cx="9.5" cy="5.2" r="3.8" fill="none" stroke="#46639a" stroke-width="1.6"/><path d="M6.6 8 L1.2 13.2" stroke="#46639a" stroke-width="2.2" stroke-linecap="round"/></svg>
<span class="t" style="left:1613.0px;top:70.5px;font-size:12px;line-height:16px;color:#262626;letter-spacing:-0.367px;">Suchen</span>
<svg class="a" style="left:1655px;top:75.5px;" width="8" height="6" viewBox="0 0 8 6"><path d="M1.7999999999999998 1.9 L4 4.1 L6.2 1.9" fill="none" stroke="#555" stroke-width="1.1"/></svg>
<svg class="a" style="left:1593px;top:94px;" width="17" height="15" viewBox="0 0 17 15"><path d="M4.5 1 H16 L12.5 5 H1 Z" fill="#dcc08a"/><path d="M4.5 5 H16 L12.5 9 H1 Z" fill="#3f6fb0"/><path d="M4.5 9.3 H16 L12.5 13.3 H1 Z" fill="#6a7f99"/><path d="M3 5.600 L14 5" stroke="#f3f3f3" stroke-width="1"/><path d="M3 9.6 L14 9" stroke="#f3f3f3" stroke-width="1"/></svg>
<span class="t" style="left:1613.0px;top:93.5px;font-size:12px;line-height:16px;color:#262626;letter-spacing:-0.404px;">Layer</span>
<svg class="a" style="left:1644px;top:99.0px;" width="8" height="6" viewBox="0 0 8 6"><path d="M1.7999999999999998 1.9 L4 4.1 L6.2 1.9" fill="none" stroke="#555" stroke-width="1.1"/></svg>
<svg class="a" style="left:1598px;top:116px;" width="10.0" height="16.0" viewBox="0 0 10 16"><path d="M0.7 0.7 V12.6 L3.6 10 L5.7 14.6 L7.6 13.8 L5.6 9.3 H9.4 Z" fill="#fff" stroke="#555" stroke-width="0.9" stroke-linejoin="round"/></svg>
<span class="t" style="left:1613.0px;top:116.5px;font-size:12px;line-height:16px;color:#262626;letter-spacing:-0.094px;">Markieren</span>
<svg class="a" style="left:1669px;top:121.5px;" width="8" height="6" viewBox="0 0 8 6"><path d="M1.7999999999999998 1.9 L4 4.1 L6.2 1.9" fill="none" stroke="#555" stroke-width="1.1"/></svg>
<span class="t" style="left:1583.5px;top:140.5px;font-size:12px;line-height:16px;color:#262626;letter-spacing:-0.404px;">Bearbeiten</span>
<div class="a" style="left:1691px;top:68px;width:1px;height:84px;background:#c8c8c8;"></div>
<svg class="a" style="left:1901px;top:146px;" width="11" height="7" viewBox="0 0 11 7"><path d="M0.5 6 L5.5 1 L10.500 6" fill="none" stroke="#444" stroke-width="1.1"/></svg>
<div class="a" style="left:6px;top:159px;width:351px;height:898px;background:#ececec;"></div>
<span class="t" style="left:9.5px;top:180.5px;font-size:22px;line-height:26px;color:#56629a;letter-spacing:-1.553px;-webkit-text-stroke:0;">Shapes</span>
<svg class="a" style="left:344px;top:186px;" width="8" height="10" viewBox="0 0 8 10"><path d="M6.5 1 L1.5 5 L6.5 9" fill="none" stroke="#333" stroke-width="1.8"/></svg>
<div class="a" style="left:9px;top:226px;width:339px;height:20px;background:#fff;border:1px solid #ababab;box-sizing:border-box;"></div>
<span class="t" style="left:11.0px;top:227.0px;font-size:12px;line-height:16px;color:#111;letter-spacing:-0.402px;">Shapes suchen</span>
<svg class="a" style="left:318px;top:233px;" width="5" height="3" viewBox="0 0 5 3"><path d="M0 0 H5 L2.500 3 Z" fill="#333"/></svg>
<svg class="a" style="left:331px;top:229px;" width="13" height="13" viewBox="0 0 13 13"><circle cx="8" cy="5" r="3.6" fill="none" stroke="#5a7aa2" stroke-width="1.5"/><path d="M5.400 7.6 L1.200 11.800" stroke="#5a7aa2" stroke-width="2.300" stroke-linecap="round"/></svg>
<span class="t" style="left:8.3px;top:275.0px;font-size:12px;line-height:16px;color:#444;letter-spacing:-0.390px;">Weitere Shapes</span>
<svg class="a" style="left:104px;top:279px;" width="5" height="8" viewBox="0 0 5 8"><path d="M0 0 L4.5 4 L0 8 Z" fill="#333"/></svg>
<span class="t" style="left:8.3px;top:299.0px;font-size:12px;line-height:16px;color:#444;letter-spacing:-0.222px;">Quick-Shapes</span>
<div class="a" style="left:6px;top:319px;width:351px;height:24px;background:#c5cbee;"></div>
<span class="t" style="left:8.3px;top:323.0px;font-size:12px;line-height:16px;color:#333;letter-spacing:-0.095px;font-weight:bold;">Gantt-Diagramm-Shapes</span>
<div class="a" style="left:8px;top:349px;width:342px;height:1px;background:#e2e2e2;"></div>
<div class="a" style="left:33px;top:370px;width:25px;height:13px;background:#6b88ca;"></div>
<svg class="a" style="left:126px;top:364px;" width="7" height="26" viewBox="0 0 7 26"><rect x="0.5" y="0.5" width="6" height="24.500" rx="1" fill="#f4f4f4" stroke="#c4c4c8"/><rect x="1.5" y="0.5" width="4" height="2.4" fill="#fff" stroke="#8a8fa8" stroke-width="0.8"/></svg>
<div class="a" style="left:200px;top:376px;width:26px;height:2px;background:#cfcfcf;"></div>
<div class="a" style="left:282px;top:376px;width:26px;height:2px;background:#c4c4c4;"></div>
<span class="t" style="left:10.0px;top:395.0px;font-size:12px;line-height:16px;color:#444;letter-spacing:-0.026px;">Gantt-Diagr...</span>
<span class="t" style="left:114.0px;top:395.0px;font-size:12px;line-height:16px;color:#444;letter-spacing:-0.338px;">Spalte</span>
<span class="t" style="left:200.0px;top:395.0px;font-size:12px;line-height:16px;color:#444;letter-spacing:-0.202px;">Zeile</span>
<span class="t" style="left:271.5px;top:395.0px;font-size:12px;line-height:16px;color:#444;letter-spacing:-0.319px;">Taskleiste</span>
<svg class="a" style="left:33px;top:434px;" width="25" height="25" viewBox="0 0 25 25"><path d="M12.5 0 L25 12.500 L12.5 25 L0 12.5 Z" fill="#000"/></svg>
<svg class="a" style="left:117px;top:439px;" width="25" height="13" viewBox="0 0 25 13"><path d="M0 1.500 H22.5 V9" fill="none" stroke="#c2c2c2" stroke-width="1.2"/><path d="M20.5 8.5 H24.5 L22.500 12 Z" fill="#c2c2c2"/></svg>
<span class="t" style="left:15.0px;top:465.0px;font-size:12px;line-height:16px;color:#444;letter-spacing:0.027px;">Meilenstein</span>
<span class="t" style="left:94.0px;top:465.0px;font-size:12px;line-height:16px;color:#444;letter-spacing:0.022px;">Verknüpfun...</span>
<div class="a" style="left:32px;top:503px;width:285px;height:1px;background:#dedede;"></div>
<div class="a" style="left:33px;top:524px;width:25px;height:2px;background:#b4b4bc;"></div>
<div class="a" style="left:117px;top:521.5px;width:26px;height:5px;background:#aeb7d8;"></div>
<div class="a" style="left:118px;top:523.5px;width:24px;height:1.2px;background:#6f7aa8;"></div>
<div class="a" style="left:204px;top:519px;width:18px;height:11px;background:#fafafa;"></div>
<span class="t" style="left:205.7px;top:518.0px;font-size:8px;line-height:12px;color:#a2a2bc;-webkit-text-stroke:0;">Text</span>
<div class="a" style="left:287px;top:519px;width:18px;height:11px;background:#fafafa;"></div>
<span class="t" style="left:288.7px;top:518.0px;font-size:8px;line-height:12px;color:#a2a2bc;-webkit-text-stroke:0;">Text</span>
<span class="t" style="left:35.5px;top:543.0px;font-size:12px;line-height:16px;color:#444;letter-spacing:-0.145px;">Titel</span>
<span class="t" style="left:107.0px;top:543.0px;font-size:12px;line-height:16px;color:#444;letter-spacing:-0.245px;">Legende</span>
<span class="t" style="left:183.5px;top:543.0px;font-size:12px;line-height:16px;color:#444;letter-spacing:-0.048px;">Textblock 8</span>
<span class="t" style="left:205.5px;top:557.5px;font-size:12px;line-height:16px;color:#444;letter-spacing:-0.057px;">Pt.</span>
<span class="t" style="left:263.5px;top:543.0px;font-size:12px;line-height:16px;color:#444;letter-spacing:-0.059px;">Textblock 10</span>
<span class="t" style="left:288.5px;top:557.5px;font-size:12px;line-height:16px;color:#444;letter-spacing:-0.057px;">Pt.</span>
<div class="a" style="left:37px;top:589px;width:18px;height:11px;background:#fafafa;"></div>
<span class="t" style="left:38.7px;top:588.0px;font-size:8px;line-height:12px;color:#a2a2bc;-webkit-text-stroke:0;">Text</span>
<svg class="a" style="left:116px;top:587px;" width="27" height="17" viewBox="0 0 27 17"><path d="M1 16 L13.500 5" stroke="#8a8a8a" stroke-width="1"/><rect x="14" y="0" width="11" height="8" fill="#fafafa"/><path d="M16 2.5 H23 M15 4.5 H24 M16 6.500 H23" stroke="#b6b6c8" stroke-width="0.8"/></svg>
<svg class="a" style="left:199px;top:587px;" width="27" height="17" viewBox="0 0 27 17"><path d="M1 16 V6 H13" fill="none" stroke="#8a8a8a" stroke-width="1.2"/><rect x="14" y="0" width="11" height="8" fill="#fafafa"/><path d="M16 2.5 H23 M15 4.500 H24 M16 6.5 H23" stroke="#b6b6c8" stroke-width="0.8"/></svg>
<svg class="a" style="left:283px;top:582px;" width="27" height="27" viewBox="0 0 27 27"><rect x="1.5" y="5.500" width="16" height="20" fill="none" stroke="#777" stroke-width="0.7" stroke-dasharray="1.2 1.2"/><rect x="12.5" y="1.5" width="13" height="19" fill="none" stroke="#777" stroke-width="0.7" stroke-dasharray="1.2 1.2"/>
<path d="M7 20 V13.500 H19 V7" fill="none" stroke="#f0e9c0" stroke-width="4.5"/><path d="M7 20 V13.5 H19 V7" fill="none" stroke="#000" stroke-width="1.6"/>
<rect x="4" y="18.5" width="6" height="4.500" fill="#fff" stroke="#000" stroke-width="1.2"/><rect x="16" y="3.5" width="6" height="4.5" fill="#fff" stroke="#000" stroke-width="1.2"/></svg>
<span class="t" style="left:13.5px;top:613.0px;font-size:12px;line-height:16px;color:#444;letter-spacing:-0.100px;">Textblock 12</span>
<span class="t" style="left:38.5px;top:627.5px;font-size:12px;line-height:16px;color:#444;letter-spacing:-0.057px;">Pt.</span>
<span class="t" style="left:99.0px;top:613.0px;font-size:12px;line-height:16px;color:#444;letter-spacing:0.027px;">Horizontale</span>
<span class="t" style="left:96.0px;top:627.5px;font-size:12px;line-height:16px;color:#444;letter-spacing:0.025px;">Beschriftung</span>
<span class="t" style="left:182.0px;top:613.0px;font-size:12px;line-height:16px;color:#444;letter-spacing:-0.032px;">Rechtwinkl.</span>
<span class="t" style="left:179.0px;top:627.5px;font-size:12px;line-height:16px;color:#444;letter-spacing:0.025px;">Beschriftung</span>
<span class="t" style="left:261.0px;top:613.0px;font-size:12px;line-height:16px;color:#444;letter-spacing:-0.093px;">Dynamischer</span>
<span class="t" style="left:270.0px;top:627.5px;font-size:12px;line-height:16px;color:#444;letter-spacing:-0.041px;">Verbinder</span>
<div class="a" style="left:368px;top:174px;width:1530px;height:828px;background:#e8e8e8;"></div>
<div class="a" style="left:607px;top:219px;width:1070px;height:757px;background:#fff;border:1px solid #a8a8a8;box-sizing:border-box;"></div>
<div class="a" style="left:630px;top:242px;width:1024px;height:711px;border:1px dashed #efefef;box-sizing:border-box;"></div>
<div class="a" style="left:368px;top:174px;width:1530px;height:17px;background:#ececec;"></div>
<div class="a" style="left:368px;top:174px;width:17px;height:822px;background:#ececec;"></div>
<svg class="a" style="left:0px;top:0px;" width="1920" height="200" viewBox="0 0 1920 200"><path d="M391.5 174 V190 M409.5 179 V190 M427.5 174 V190 M445.5 179 V190 M463.5 174 V190 M481.5 179 V190 M499.5 174 V190 M517.5 179 V190 M535.5 174 V190 M553.5 179 V190 M571.5 174 V190 M589.5 179 V190 M607.5 174 V190 M625.5 179 V190 M643.5 174 V190 M661.5 179 V190 M679.5 174 V190 M697.5 179 V190 M715.5 174 V190 M733.5 179 V190 M751.5 174 V190 M769.5 179 V190 M787.5 174 V190 M805.5 179 V190 M823.5 174 V190 M841.5 179 V190 M859.5 174 V190 M877.5 179 V190 M895.5 174 V190 M913.5 179 V190 M931.5 174 V190 M949.5 179 V190 M967.5 174 V190 M985.5 179 V190 M1003.5 174 V190 M1021.5 179 V190 M1039.5 174 V190 M1057.5 179 V190 M1075.5 174 V190 M1093.5 179 V190 M1111.5 174 V190 M1129.5 179 V190 M1147.5 174 V190 M1165.5 179 V190 M1183.5 174 V190 M1201.5 179 V190 M1219.5 174 V190 M1237.5 179 V190 M1255.5 174 V190 M1273.5 179 V190 M1291.5 174 V190 M1309.5 179 V190 M1327.5 174 V190 M1345.5 179 V190 M1363.5 174 V190 M1381.5 179 V190 M1399.5 174 V190 M1417.5 179 V190 M1435.5 174 V190 M1453.5 179 V190 M1471.5 174 V190 M1489.5 179 V190 M1507.5 174 V190 M1525.5 179 V190 M1543.5 174 V190 M1561.5 179 V190 M1579.5 174 V190 M1597.5 179 V190 M1615.5 174 V190 M1633.5 179 V190 M1651.5 174 V190 M1669.5 179 V190 M1687.5 174 V190 M1705.5 179 V190 M1723.5 174 V190 M1741.5 179 V190 M1759.5 174 V190 M1777.5 179 V190 M1795.5 174 V190 M1813.5 179 V190 M1831.5 174 V190 M1849.5 179 V190 M1867.5 174 V190 M1885.5 179 V190 M384 190.5 H1896 " stroke="#a4a4a4" stroke-width="1" fill="none"/><path d="M376.500 175 V189 M369 182.5 H383" stroke="#d4d4d4" stroke-width="1"/></svg>
<span class="t" style="left:393.8px;top:174.2px;font-size:9.5px;line-height:13.5px;color:#333;letter-spacing:-0.5px;-webkit-text-stroke:0.080px;">-60</span>
<span class="t" style="left:429.8px;top:174.2px;font-size:9.5px;line-height:13.5px;color:#333;letter-spacing:-0.5px;-webkit-text-stroke:0.080px;">-50</span>
<span class="t" style="left:465.8px;top:174.2px;font-size:9.5px;line-height:13.5px;color:#333;letter-spacing:-0.5px;-webkit-text-stroke:0.080px;">-40</span>
<span class="t" style="left:501.8px;top:174.2px;font-size:9.5px;line-height:13.5px;color:#333;letter-spacing:-0.5px;-webkit-text-stroke:0.080px;">-30</span>
<span class="t" style="left:537.8px;top:174.2px;font-size:9.5px;line-height:13.5px;color:#333;letter-spacing:-0.5px;-webkit-text-stroke:0.080px;">-20</span>
<span class="t" style="left:573.8px;top:174.2px;font-size:9.5px;line-height:13.5px;color:#333;letter-spacing:-0.5px;-webkit-text-stroke:0.080px;">-10</span>
<span class="t" style="left:609.8px;top:174.2px;font-size:9.5px;line-height:13.5px;color:#333;letter-spacing:-0.5px;-webkit-text-stroke:0.080px;">0</span>
<span class="t" style="left:645.8px;top:174.2px;font-size:9.5px;line-height:13.5px;color:#333;letter-spacing:-0.5px;-webkit-text-stroke:0.080px;">10</span>
<span class="t" style="left:681.8px;top:174.2px;font-size:9.5px;line-height:13.5px;color:#333;letter-spacing:-0.5px;-webkit-text-stroke:0.080px;">20</span>
<span class="t" style="left:717.8px;top:174.2px;font-size:9.5px;line-height:13.5px;color:#333;letter-spacing:-0.5px;-webkit-text-stroke:0.080px;">30</span>
<span class="t" style="left:753.8px;top:174.2px;font-size:9.5px;line-height:13.5px;color:#333;letter-spacing:-0.5px;-webkit-text-stroke:0.080px;">40</span>
<span class="t" style="left:789.8px;top:174.2px;font-size:9.5px;line-height:13.5px;color:#333;letter-spacing:-0.5px;-webkit-text-stroke:0.080px;">50</span>
<span class="t" style="left:825.8px;top:174.2px;font-size:9.5px;line-height:13.5px;color:#333;letter-spacing:-0.5px;-webkit-text-stroke:0.080px;">60</span>
<span class="t" style="left:861.8px;top:174.2px;font-size:9.5px;line-height:13.5px;color:#333;letter-spacing:-0.5px;-webkit-text-stroke:0.080px;">70</span>
<span class="t" style="left:897.8px;top:174.2px;font-size:9.5px;line-height:13.5px;color:#333;letter-spacing:-0.5px;-webkit-text-stroke:0.080px;">80</span>
<span class="t" style="left:933.8px;top:174.2px;font-size:9.5px;line-height:13.5px;color:#333;letter-spacing:-0.5px;-webkit-text-stroke:0.080px;">90</span>
<span class="t" style="left:969.8px;top:174.2px;font-size:9.5px;line-height:13.5px;color:#333;letter-spacing:-0.5px;-webkit-text-stroke:0.080px;">100</span>
<span class="t" style="left:1005.8px;top:174.2px;font-size:9.5px;line-height:13.5px;color:#333;letter-spacing:-0.5px;-webkit-text-stroke:0.080px;">110</span>
<span class="t" style="left:1041.8px;top:174.2px;font-size:9.5px;line-height:13.5px;color:#333;letter-spacing:-0.5px;-webkit-text-stroke:0.080px;">120</span>
<span class="t" style="left:1077.8px;top:174.2px;font-size:9.5px;line-height:13.5px;color:#333;letter-spacing:-0.5px;-webkit-text-stroke:0.080px;">130</span>
<span class="t" style="left:1113.8px;top:174.2px;font-size:9.5px;line-height:13.5px;color:#333;letter-spacing:-0.5px;-webkit-text-stroke:0.080px;">140</span>
<span class="t" style="left:1149.8px;top:174.2px;font-size:9.5px;line-height:13.5px;color:#333;letter-spacing:-0.5px;-webkit-text-stroke:0.080px;">150</span>
<span class="t" style="left:1185.8px;top:174.2px;font-size:9.5px;line-height:13.5px;color:#333;letter-spacing:-0.5px;-webkit-text-stroke:0.080px;">160</span>
<span class="t" style="left:1221.8px;top:174.2px;font-size:9.5px;line-height:13.5px;color:#333;letter-spacing:-0.5px;-webkit-text-stroke:0.080px;">170</span>
<span class="t" style="left:1257.8px;top:174.2px;font-size:9.5px;line-height:13.5px;color:#333;letter-spacing:-0.5px;-webkit-text-stroke:0.080px;">180</span>
<span class="t" style="left:1293.8px;top:174.2px;font-size:9.5px;line-height:13.5px;color:#333;letter-spacing:-0.5px;-webkit-text-stroke:0.080px;">190</span>
<span class="t" style="left:1329.8px;top:174.2px;font-size:9.5px;line-height:13.5px;color:#333;letter-spacing:-0.5px;-webkit-text-stroke:0.080px;">200</span>
<span class="t" style="left:1365.8px;top:174.2px;font-size:9.5px;line-height:13.5px;color:#333;letter-spacing:-0.5px;-webkit-text-stroke:0.080px;">210</span>
<span class="t" style="left:1401.8px;top:174.2px;font-size:9.5px;line-height:13.5px;color:#333;letter-spacing:-0.5px;-webkit-text-stroke:0.080px;">220</span>
<span class="t" style="left:1437.8px;top:174.2px;font-size:9.5px;line-height:13.5px;color:#333;letter-spacing:-0.5px;-webkit-text-stroke:0.080px;">230</span>
<span class="t" style="left:1473.8px;top:174.2px;font-size:9.5px;line-height:13.5px;color:#333;letter-spacing:-0.5px;-webkit-text-stroke:0.080px;">240</span>
<span class="t" style="left:1509.8px;top:174.2px;font-size:9.5px;line-height:13.5px;color:#333;letter-spacing:-0.5px;-webkit-text-stroke:0.080px;">250</span>
<span class="t" style="left:1545.8px;top:174.2px;font-size:9.5px;line-height:13.5px;color:#333;letter-spacing:-0.5px;-webkit-text-stroke:0.080px;">260</span>
<span class="t" style="left:1581.8px;top:174.2px;font-size:9.5px;line-height:13.5px;color:#333;letter-spacing:-0.5px;-webkit-text-stroke:0.080px;">270</span>
<span class="t" style="left:1617.8px;top:174.2px;font-size:9.5px;line-height:13.5px;color:#333;letter-spacing:-0.5px;-webkit-text-stroke:0.080px;">280</span>
<span class="t" style="left:1653.8px;top:174.2px;font-size:9.5px;line-height:13.5px;color:#333;letter-spacing:-0.5px;-webkit-text-stroke:0.080px;">290</span>
<span class="t" style="left:1689.8px;top:174.2px;font-size:9.5px;line-height:13.5px;color:#333;letter-spacing:-0.5px;-webkit-text-stroke:0.080px;">300</span>
<span class="t" style="left:1725.8px;top:174.2px;font-size:9.5px;line-height:13.5px;color:#333;letter-spacing:-0.5px;-webkit-text-stroke:0.080px;">310</span>
<span class="t" style="left:1761.8px;top:174.2px;font-size:9.5px;line-height:13.5px;color:#333;letter-spacing:-0.5px;-webkit-text-stroke:0.080px;">320</span>
<span class="t" style="left:1797.8px;top:174.2px;font-size:9.5px;line-height:13.5px;color:#333;letter-spacing:-0.5px;-webkit-text-stroke:0.080px;">330</span>
<span class="t" style="left:1833.8px;top:174.2px;font-size:9.5px;line-height:13.5px;color:#333;letter-spacing:-0.5px;-webkit-text-stroke:0.080px;">340</span>
<span class="t" style="left:1869.8px;top:174.2px;font-size:9.5px;line-height:13.5px;color:#333;letter-spacing:-0.5px;-webkit-text-stroke:0.080px;">350</span>
<svg class="a" style="left:0px;top:0px;" width="400" height="1000" viewBox="0 0 400 1000"><path d="M373 993.5 H384 M368 975.5 H384 M373 957.5 H384 M368 939.5 H384 M373 921.5 H384 M368 903.5 H384 M373 885.5 H384 M368 867.5 H384 M373 849.5 H384 M368 831.5 H384 M373 813.5 H384 M368 795.5 H384 M373 777.5 H384 M368 759.5 H384 M373 741.5 H384 M368 723.5 H384 M373 705.5 H384 M368 687.5 H384 M373 669.5 H384 M368 651.5 H384 M373 633.5 H384 M368 615.5 H384 M373 597.5 H384 M368 579.5 H384 M373 561.5 H384 M368 543.5 H384 M373 525.5 H384 M368 507.5 H384 M373 489.5 H384 M368 471.5 H384 M373 453.5 H384 M368 435.5 H384 M373 417.5 H384 M368 399.5 H384 M373 381.5 H384 M368 363.5 H384 M373 345.5 H384 M368 327.5 H384 M373 309.5 H384 M368 291.5 H384 M373 273.5 H384 M368 255.5 H384 M373 237.5 H384 M368 219.5 H384 M373 201.5 H384 M384.5 190 V994 " stroke="#a4a4a4" stroke-width="1" fill="none"/></svg>
<span class="t" style="left:374px;top:977.5px;font-size:9.5px;line-height:12px;color:#333;letter-spacing:-0.5px;-webkit-text-stroke:0.080px;transform-origin:0 0;transform:translate(-6px,0) rotate(-90deg) translate(-100%,0);">0</span>
<span class="t" style="left:374px;top:941.5px;font-size:9.5px;line-height:12px;color:#333;letter-spacing:-0.5px;-webkit-text-stroke:0.080px;transform-origin:0 0;transform:translate(-6px,0) rotate(-90deg) translate(-100%,0);">10</span>
<span class="t" style="left:374px;top:905.5px;font-size:9.5px;line-height:12px;color:#333;letter-spacing:-0.5px;-webkit-text-stroke:0.080px;transform-origin:0 0;transform:translate(-6px,0) rotate(-90deg) translate(-100%,0);">20</span>
<span class="t" style="left:374px;top:869.5px;font-size:9.5px;line-height:12px;color:#333;letter-spacing:-0.5px;-webkit-text-stroke:0.080px;transform-origin:0 0;transform:translate(-6px,0) rotate(-90deg) translate(-100%,0);">30</span>
<span class="t" style="left:374px;top:833.5px;font-size:9.5px;line-height:12px;color:#333;letter-spacing:-0.5px;-webkit-text-stroke:0.080px;transform-origin:0 0;transform:translate(-6px,0) rotate(-90deg) translate(-100%,0);">40</span>
<span class="t" style="left:374px;top:797.5px;font-size:9.5px;line-height:12px;color:#333;letter-spacing:-0.5px;-webkit-text-stroke:0.080px;transform-origin:0 0;transform:translate(-6px,0) rotate(-90deg) translate(-100%,0);">50</span>
<span class="t" style="left:374px;top:761.5px;font-size:9.5px;line-height:12px;color:#333;letter-spacing:-0.5px;-webkit-text-stroke:0.080px;transform-origin:0 0;transform:translate(-6px,0) rotate(-90deg) translate(-100%,0);">60</span>
<span class="t" style="left:374px;top:725.5px;font-size:9.5px;line-height:12px;color:#333;letter-spacing:-0.5px;-webkit-text-stroke:0.080px;transform-origin:0 0;transform:translate(-6px,0) rotate(-90deg) translate(-100%,0);">70</span>
<span class="t" style="left:374px;top:689.5px;font-size:9.5px;line-height:12px;color:#333;letter-spacing:-0.5px;-webkit-text-stroke:0.080px;transform-origin:0 0;transform:translate(-6px,0) rotate(-90deg) translate(-100%,0);">80</span>
<span class="t" style="left:374px;top:653.5px;font-size:9.5px;line-height:12px;color:#333;letter-spacing:-0.5px;-webkit-text-stroke:0.080px;transform-origin:0 0;transform:translate(-6px,0) rotate(-90deg) translate(-100%,0);">90</span>
<span class="t" style="left:374px;top:617.5px;font-size:9.5px;line-height:12px;color:#333;letter-spacing:-0.5px;-webkit-text-stroke:0.080px;transform-origin:0 0;transform:translate(-6px,0) rotate(-90deg) translate(-100%,0);">100</span>
<span class="t" style="left:374px;top:581.5px;font-size:9.5px;line-height:12px;color:#333;letter-spacing:-0.5px;-webkit-text-stroke:0.080px;transform-origin:0 0;transform:translate(-6px,0) rotate(-90deg) translate(-100%,0);">110</span>
<span class="t" style="left:374px;top:545.5px;font-size:9.5px;line-height:12px;color:#333;letter-spacing:-0.5px;-webkit-text-stroke:0.080px;transform-origin:0 0;transform:translate(-6px,0) rotate(-90deg) translate(-100%,0);">120</span>
<span class="t" style="left:374px;top:509.5px;font-size:9.5px;line-height:12px;color:#333;letter-spacing:-0.5px;-webkit-text-stroke:0.080px;transform-origin:0 0;transform:translate(-6px,0) rotate(-90deg) translate(-100%,0);">130</span>
<span class="t" style="left:374px;top:473.5px;font-size:9.5px;line-height:12px;color:#333;letter-spacing:-0.5px;-webkit-text-stroke:0.080px;transform-origin:0 0;transform:translate(-6px,0) rotate(-90deg) translate(-100%,0);">140</span>
<span class="t" style="left:374px;top:437.5px;font-size:9.5px;line-height:12px;color:#333;letter-spacing:-0.5px;-webkit-text-stroke:0.080px;transform-origin:0 0;transform:translate(-6px,0) rotate(-90deg) translate(-100%,0);">150</span>
<span class="t" style="left:374px;top:401.5px;font-size:9.5px;line-height:12px;color:#333;letter-spacing:-0.5px;-webkit-text-stroke:0.080px;transform-origin:0 0;transform:translate(-6px,0) rotate(-90deg) translate(-100%,0);">160</span>
<span class="t" style="left:374px;top:365.5px;font-size:9.5px;line-height:12px;color:#333;letter-spacing:-0.5px;-webkit-text-stroke:0.080px;transform-origin:0 0;transform:translate(-6px,0) rotate(-90deg) translate(-100%,0);">170</span>
<span class="t" style="left:374px;top:329.5px;font-size:9.5px;line-height:12px;color:#333;letter-spacing:-0.5px;-webkit-text-stroke:0.080px;transform-origin:0 0;transform:translate(-6px,0) rotate(-90deg) translate(-100%,0);">180</span>
<span class="t" style="left:374px;top:293.5px;font-size:9.5px;line-height:12px;color:#333;letter-spacing:-0.5px;-webkit-text-stroke:0.080px;transform-origin:0 0;transform:translate(-6px,0) rotate(-90deg) translate(-100%,0);">190</span>
<span class="t" style="left:374px;top:257.5px;font-size:9.5px;line-height:12px;color:#333;letter-spacing:-0.5px;-webkit-text-stroke:0.080px;transform-origin:0 0;transform:translate(-6px,0) rotate(-90deg) translate(-100%,0);">200</span>
<span class="t" style="left:374px;top:221.5px;font-size:9.5px;line-height:12px;color:#333;letter-spacing:-0.5px;-webkit-text-stroke:0.080px;transform-origin:0 0;transform:translate(-6px,0) rotate(-90deg) translate(-100%,0);">210</span>
<span class="t" style="left:374px;top:185.5px;font-size:9.5px;line-height:12px;color:#333;letter-spacing:-0.5px;-webkit-text-stroke:0.080px;transform-origin:0 0;transform:translate(-6px,0) rotate(-90deg) translate(-100%,0);">220</span>
<div class="a" style="left:368px;top:159px;width:17px;height:31px;background:#e6e6e6;"></div>
<svg class="a" style="left:368px;top:174px;" width="17" height="17" viewBox="0 0 17 17"><path d="M8.5 1 V15 M1 8.5 H15" stroke="#d6d6d6" stroke-width="1"/></svg>
<div class="a" style="left:777px;top:412px;width:730px;height:369.5px;background:#6b8acb;border:3px solid #c9cdd8;box-sizing:border-box;box-shadow:inset 0 0 0 1.5px #8592b8;"></div>
<svg class="a" style="left:775.4px;top:411.2px;" width="12" height="12" viewBox="0 0 12 12"><circle cx="6" cy="6" r="4.900" fill="#fff" stroke="#808080" stroke-width="1.700"/></svg>
<svg class="a" style="left:1135.8px;top:411.2px;" width="12" height="12" viewBox="0 0 12 12"><circle cx="6" cy="6" r="4.900" fill="#fff" stroke="#808080" stroke-width="1.700"/></svg>
<svg class="a" style="left:1496.3px;top:411.2px;" width="12" height="12" viewBox="0 0 12 12"><circle cx="6" cy="6" r="4.900" fill="#fff" stroke="#808080" stroke-width="1.700"/></svg>
<svg class="a" style="left:775.4px;top:591.2px;" width="12" height="12" viewBox="0 0 12 12"><circle cx="6" cy="6" r="4.900" fill="#fff" stroke="#808080" stroke-width="1.700"/></svg>
<svg class="a" style="left:1496.3px;top:591.2px;" width="12" height="12" viewBox="0 0 12 12"><circle cx="6" cy="6" r="4.900" fill="#fff" stroke="#808080" stroke-width="1.700"/></svg>
<svg class="a" style="left:775.4px;top:771.2px;" width="12" height="12" viewBox="0 0 12 12"><circle cx="6" cy="6" r="4.900" fill="#fff" stroke="#808080" stroke-width="1.700"/></svg>
<svg class="a" style="left:1135.8px;top:771.2px;" width="12" height="12" viewBox="0 0 12 12"><circle cx="6" cy="6" r="4.900" fill="#fff" stroke="#808080" stroke-width="1.700"/></svg>
<svg class="a" style="left:1496.3px;top:771.2px;" width="12" height="12" viewBox="0 0 12 12"><circle cx="6" cy="6" r="4.900" fill="#fff" stroke="#808080" stroke-width="1.700"/></svg>
<div class="a" style="left:1899px;top:191px;width:15px;height:794px;background:#dadada;"></div>
<div class="a" style="left:1899px;top:175.5px;width:15px;height:15.5px;background:#fff;border:1px solid #8e8e8e;box-sizing:border-box;"></div>
<svg class="a" style="left:1903px;top:180px;" width="7" height="5" viewBox="0 0 7 5"><path d="M0 4.500 H7 L3.5 0.5 Z" fill="#666"/></svg>
<div class="a" style="left:1899px;top:409px;width:15px;height:368px;background:#fff;border:1px solid #8e8e8e;box-sizing:border-box;"></div>
<div class="a" style="left:1899px;top:985px;width:15px;height:15px;background:#fff;border:1px solid #8e8e8e;box-sizing:border-box;"></div>
<svg class="a" style="left:1903px;top:990px;" width="7" height="5" viewBox="0 0 7 5"><path d="M0 0.5 H7 L3.5 4.5 Z" fill="#666"/></svg>
<div class="a" style="left:385px;top:1003px;width:1496px;height:15px;background:#dadada;"></div>
<div class="a" style="left:370px;top:1003px;width:15px;height:15px;background:#fff;border:1px solid #8e8e8e;box-sizing:border-box;"></div>
<svg class="a" style="left:375px;top:1007px;" width="5" height="7" viewBox="0 0 5 7"><path d="M4.5 0 V7 L0.5 3.500 Z" fill="#666"/></svg>
<div class="a" style="left:759px;top:1003px;width:743px;height:15px;background:#fff;border:1px solid #8e8e8e;box-sizing:border-box;"></div>
<div class="a" style="left:1881px;top:1003px;width:15px;height:15px;background:#fff;border:1px solid #8e8e8e;box-sizing:border-box;"></div>
<svg class="a" style="left:1886px;top:1007px;" width="5" height="7" viewBox="0 0 5 7"><path d="M0.5 0 V7 L4.5 3.5 Z" fill="#666"/></svg>
<span class="t" style="left:383.0px;top:1029.5px;font-size:12px;line-height:16px;color:#44548f;letter-spacing:-0.025px;font-weight:bold;">Zeichenblatt-1</span>
<span class="t" style="left:495.0px;top:1029.5px;font-size:12px;line-height:16px;color:#555;letter-spacing:-0.003px;">Alle</span>
<svg class="a" style="left:520px;top:1035px;" width="8" height="5" viewBox="0 0 8 5"><path d="M0 5 H8 L4 0.5 Z" fill="#44548f"/></svg>
<svg class="a" style="left:555px;top:1030px;" width="16" height="16" viewBox="0 0 16 16"><circle cx="8" cy="8" r="6.800" fill="none" stroke="#44548f" stroke-width="1.1"/><path d="M8 4.2 V11.8 M4.2 8 H11.800" stroke="#44548f" stroke-width="1.1"/></svg>
<div class="a" style="left:0px;top:1057px;width:1920px;height:21px;background:#f3f3f3;"></div>
<div class="a" style="left:0px;top:1057px;width:1920px;height:1px;background:#d6d6d6;"></div>
<div class="a" style="left:0px;top:1077.5px;width:1920px;height:3px;background:#1a1a1a;"></div>
<span class="t" style="left:6.6px;top:1060.5px;font-size:12px;line-height:16px;color:#333;letter-spacing:-0.287px;">Zeichenbl. 1 von 1</span>
<span class="t" style="left:120.3px;top:1060.0px;font-size:12px;line-height:16px;color:#333;letter-spacing:-0.576px;">Breite: 200 mm</span>
<span class="t" style="left:210.4px;top:1060.0px;font-size:12px;line-height:16px;color:#333;letter-spacing:-0.550px;">Höhe: 100 mm</span>
<span class="t" style="left:299.0px;top:1060.0px;font-size:12px;line-height:16px;color:#333;letter-spacing:-0.143px;">Winkel: 0 grad</span>
<span class="t" style="left:392.6px;top:1060.5px;font-size:12px;line-height:16px;color:#333;letter-spacing:-0.327px;">Deutsch (Deutschland)</span>
<svg class="a" style="left:528px;top:1061px;" width="14" height="13" viewBox="0 0 14 13"><rect x="0.5" y="3.5" width="12" height="9" fill="#fff" stroke="#555"/><circle cx="3.500" cy="3" r="2.600" fill="#444"/><path d="M3 7.500 H11 M3 10 H11 M6 5 V12 M9 5 V12" stroke="#777" stroke-width="0.8"/></svg>
<svg class="a" style="left:1660.5px;top:1062.5px;" width="12" height="11" viewBox="0 0 12 11"><rect x="0.500" y="0.500" width="11" height="2" fill="#fff" stroke="#555"/><path d="M1.500 2.500 V6.500 H10.500 V2.500" fill="none" stroke="#555"/><path d="M6 6.500 V10 M3.500 10.500 H8.500" stroke="#555"/></svg>
<div class="a" style="left:1693.5px;top:1068px;width:7px;height:1px;background:#444;"></div>
<div class="a" style="left:1707px;top:1067.7px;width:98px;height:1.3px;background:#555;"></div>
<div class="a" style="left:1751px;top:1063px;width:5.2px;height:11px;background:#6c6c6c;"></div>
<svg class="a" style="left:1811px;top:1064.5px;" width="8" height="8" viewBox="0 0 8 8"><path d="M4 0.300 V7.700 M0.300 4 H7.700" stroke="#444" stroke-width="1"/></svg>
<span class="t" style="left:1831.0px;top:1061.0px;font-size:12px;line-height:16px;color:#333;letter-spacing:-0.838px;">95 %</span>
<svg class="a" style="left:1870px;top:1061.5px;" width="12" height="13" viewBox="0 0 12 13"><rect x="0" y="0" width="11.500" height="12.500" fill="#dadada"/><path d="M5.700 1.500 V11 M1.500 6.200 H10 M4.200 3 L5.700 1.500 L7.200 3 M4.200 9.500 L5.700 11 L7.200 9.500" fill="none" stroke="#666" stroke-width="0.900"/></svg>
<svg class="a" style="left:1894px;top:1061px;" width="17" height="14" viewBox="0 0 17 14"><rect x="0.7" y="0.7" width="5.500" height="4" fill="none" stroke="#444" stroke-width="1.3"/><rect x="10" y="0.7" width="5.5" height="4" fill="none" stroke="#444" stroke-width="1.3"/><rect x="3.500" y="9" width="8" height="4.2" fill="none" stroke="#444" stroke-width="1.3"/><path d="M7.5 2.7 H9 M7.5 2.7 V9" stroke="#444" stroke-width="1.2"/></svg>
<div class="a" style="left:638px;top:368.5px;width:644px;height:336px;border-radius:8px;background:#f0f0f0;box-shadow:0 0 0 1px rgba(110,110,110,0.400),0 16px 46px 6px rgba(0,0,0,0.310);overflow:hidden;"><div class="a" style="left:0;top:0;width:100%;height:31px;background:#fff;"></div></div>
<span class="t" style="left:646.6px;top:376.0px;font-size:12px;line-height:16px;color:#1a1a1a;letter-spacing:0.121px;">Gantt-Diagrammoptionen</span>
<svg class="a" style="left:1262px;top:378.5px;" width="10" height="10" viewBox="0 0 10 10"><path d="M0.5 0.5 L9.5 9.5 M9.5 0.5 L0.5 9.500" stroke="#222" stroke-width="1.1"/></svg>
<div class="a" style="left:645px;top:427px;width:629px;height:240.5px;background:#f9f9f9;border:1px solid #e6e6e6;box-sizing:border-box;"></div>
<div class="a" style="left:645px;top:406.5px;width:50px;height:21.5px;background:#f9f9f9;border:1px solid #e4e4e4;box-sizing:border-box;border-bottom:none;border-radius:3px 3px 0 0;"></div>
<div class="a" style="left:695px;top:409px;width:46px;height:18px;background:#f3f3f3;border:1px solid #e8e8e8;box-sizing:border-box;border-bottom:none;border-left:none;"></div>
<span class="t" style="left:652.6px;top:408.0px;font-size:12px;line-height:16px;color:#1a1a1a;letter-spacing:-0.489px;">Datum</span>
<span class="t" style="left:700.4px;top:410.0px;font-size:12px;line-height:16px;color:#1a1a1a;letter-spacing:-0.401px;">Format</span>
<span class="t" style="left:659.0px;top:439.1px;font-size:12px;line-height:16px;color:#1a1a1a;letter-spacing:0.067px;">Aufgabenoptionen</span>
<div class="a" style="left:764.5px;top:447px;width:156.5px;height:1px;background:#dcdcdc;"></div>
<span class="t" style="left:659.0px;top:489.1px;font-size:12px;line-height:16px;color:#1a1a1a;letter-spacing:-0.010px;">Daueroptionen</span>
<div class="a" style="left:744.6px;top:497px;width:176.39999999999998px;height:1px;background:#dcdcdc;"></div>
<span class="t" style="left:659.0px;top:567.1px;font-size:12px;line-height:16px;color:#1a1a1a;letter-spacing:-0.262px;">Zeitskalenbereich</span>
<div class="a" style="left:755.6px;top:575px;width:503.4px;height:1px;background:#dcdcdc;"></div>
<span class="t" style="left:950.0px;top:439.1px;font-size:12px;line-height:16px;color:#1a1a1a;letter-spacing:-0.078px;">Zeiteinheiten</span>
<div class="a" style="left:1024.7px;top:447px;width:234.29999999999995px;height:1px;background:#dcdcdc;"></div>
<span class="t" style="left:673.0px;top:460.1px;font-size:12px;line-height:16px;color:#1a1a1a;letter-spacing:-0.153px;">Anzahl der Aufgaben:</span>
<span class="t" style="left:673.0px;top:510.1px;font-size:12px;line-height:16px;color:#1a1a1a;letter-spacing:-0.405px;">Format:</span>
<span class="t" style="left:673.0px;top:538.1px;font-size:12px;line-height:16px;color:#1a1a1a;letter-spacing:-0.155px;">Stunden pro Tag:</span>
<span class="t" style="left:673.0px;top:590.1px;font-size:12px;line-height:16px;color:#1a1a1a;letter-spacing:-0.148px;">Anfangsdatum:</span>
<span class="t" style="left:673.0px;top:625.6px;font-size:12px;line-height:16px;color:#1a1a1a;letter-spacing:-0.325px;">Abschlussdatum:</span>
<span class="t" style="left:958.2px;top:460.1px;font-size:12px;line-height:16px;color:#1a1a1a;letter-spacing:-0.310px;">Größere Einheiten:</span>
<span class="t" style="left:958.2px;top:489.1px;font-size:12px;line-height:16px;color:#1a1a1a;letter-spacing:-0.260px;">Kleinere Einheiten:</span>
<div class="a" style="left:835px;top:458.5px;width:79px;height:21px;background:#fff;border:1px solid #9a9a9a;box-sizing:border-box;"></div>
<div class="a" style="left:837.5px;top:461.5px;width:9.5px;height:13px;background:#a6c4e6;"></div>
<span class="t" style="left:838.5px;top:460.5px;font-size:12px;line-height:16px;color:#1a1a1a;">5</span>
<div class="a" style="left:1114px;top:457px;width:136.5px;height:20.5px;background:#fff;border:1px solid #9a9a9a;box-sizing:border-box;"></div>
<span class="t" style="left:1118.0px;top:458.8px;font-size:12px;line-height:16px;color:#1a1a1a;letter-spacing:-0.004px;">Monate</span>
<div class="a" style="left:1231.5px;top:459px;width:17px;height:16.5px;border:1px solid #e2e2e2;box-sizing:border-box;"></div>
<svg class="a" style="left:1235.5px;top:465.25px;" width="9" height="6" viewBox="0 0 9 6"><path d="M0.500 0.800 L4.500 4.800 L8.5 0.8" fill="none" stroke="#444" stroke-width="1"/></svg>
<div class="a" style="left:1114px;top:486.5px;width:136.5px;height:20.5px;background:#fff;border:1px solid #9a9a9a;box-sizing:border-box;"></div>
<span class="t" style="left:1118.0px;top:488.2px;font-size:12px;line-height:16px;color:#1a1a1a;letter-spacing:-0.255px;">Tage</span>
<div class="a" style="left:1231.5px;top:488.5px;width:17px;height:16.5px;border:1px solid #e2e2e2;box-sizing:border-box;"></div>
<svg class="a" style="left:1235.5px;top:494.75px;" width="9" height="6" viewBox="0 0 9 6"><path d="M0.500 0.800 L4.500 4.800 L8.5 0.8" fill="none" stroke="#444" stroke-width="1"/></svg>
<div class="a" style="left:791px;top:507.5px;width:122.5px;height:20.5px;background:#fff;border:1px solid #9a9a9a;box-sizing:border-box;"></div>
<span class="t" style="left:795.0px;top:509.2px;font-size:12px;line-height:16px;color:#1a1a1a;letter-spacing:-0.214px;">Tage Stunden</span>
<div class="a" style="left:894.5px;top:509.5px;width:17px;height:16.5px;border:1px solid #e2e2e2;box-sizing:border-box;"></div>
<svg class="a" style="left:898.5px;top:515.75px;" width="9" height="6" viewBox="0 0 9 6"><path d="M0.500 0.800 L4.500 4.800 L8.5 0.8" fill="none" stroke="#444" stroke-width="1"/></svg>
<div class="a" style="left:895px;top:509.5px;width:17px;height:16.5px;background:#cfe3f6;border:1px solid #6f9fcf;box-sizing:border-box;border-radius:2px;"></div>
<svg class="a" style="left:899px;top:515.5px;" width="9" height="6" viewBox="0 0 9 6"><path d="M0.500 0.800 L4.500 4.800 L8.5 0.8" fill="none" stroke="#444" stroke-width="1"/></svg>
<div class="a" style="left:854px;top:536.5px;width:57.5px;height:21px;background:#fbfbfb;border:1px solid #b0b0b0;box-sizing:border-box;"></div>
<span class="t" style="left:857.0px;top:538.5px;font-size:12px;line-height:16px;color:#7c7c7c;">8</span>
<div class="a" style="left:895.5px;top:538.5px;width:14.5px;height:8px;background:#efefef;border:1px solid #cfcfcf;box-sizing:border-box;"></div>
<div class="a" style="left:895.5px;top:547.5px;width:14.5px;height:8px;background:#efefef;border:1px solid #cfcfcf;box-sizing:border-box;"></div>
<svg class="a" style="left:900px;top:541px;" width="5" height="3" viewBox="0 0 5 3"><path d="M0 3 H5 L2.500 0.300 Z" fill="#333"/></svg>
<svg class="a" style="left:900px;top:550px;" width="5" height="3" viewBox="0 0 5 3"><path d="M0 0 H5 L2.500 2.700 Z" fill="#333"/></svg>
<div class="a" style="left:795px;top:592px;width:104.5px;height:21.5px;background:#fff;border:1px solid #9a9a9a;box-sizing:border-box;"></div>
<span class="t" style="left:798.0px;top:594.0px;font-size:12px;line-height:16px;color:#1a1a1a;letter-spacing:-0.576px;">29.03.2022</span>
<div class="a" style="left:901.5px;top:592.5px;width:22px;height:20px;background:#fdfdfd;border:1px solid #d2d2d2;box-sizing:border-box;border-radius:3px;"></div>
<svg class="a" style="left:907px;top:600px;" width="11" height="6" viewBox="0 0 11 6"><path d="M0 0 H10.600 L5.3 5.800 Z" fill="#555"/></svg>
<div class="a" style="left:950px;top:592.5px;width:84px;height:21px;background:#fbfbfb;border:1px solid #8a8a8a;box-sizing:border-box;border-radius:2px;"></div>
<span class="t" style="left:952.0px;top:596.0px;font-size:12px;line-height:16px;color:#8c8c8c;letter-spacing:-0.526px;">08:00:00</span>
<div class="a" style="left:1015.5px;top:594.5px;width:15.5px;height:8px;background:#f1f1f1;border:1px solid #e4e4e4;box-sizing:border-box;"></div>
<div class="a" style="left:1015.5px;top:603px;width:15.5px;height:8px;background:#f1f1f1;border:1px solid #e4e4e4;box-sizing:border-box;"></div>
<svg class="a" style="left:1020.5px;top:597px;" width="5" height="3" viewBox="0 0 5 3"><path d="M0 3 H5 L2.500 0.300 Z" fill="#555"/></svg>
<svg class="a" style="left:1020.5px;top:605.5px;" width="5" height="3" viewBox="0 0 5 3"><path d="M0 0 H5 L2.500 2.700 Z" fill="#555"/></svg>
<div class="a" style="left:795px;top:627px;width:104.5px;height:21.5px;background:#fff;border:1px solid #9a9a9a;box-sizing:border-box;"></div>
<span class="t" style="left:798.0px;top:629.0px;font-size:12px;line-height:16px;color:#1a1a1a;letter-spacing:-0.487px;">11.04.2022</span>
<div class="a" style="left:901.5px;top:627.5px;width:22px;height:20px;background:#fdfdfd;border:1px solid #d2d2d2;box-sizing:border-box;border-radius:3px;"></div>
<svg class="a" style="left:907px;top:635px;" width="11" height="6" viewBox="0 0 11 6"><path d="M0 0 H10.600 L5.3 5.800 Z" fill="#555"/></svg>
<div class="a" style="left:950px;top:627.5px;width:84px;height:21px;background:#fbfbfb;border:1px solid #8a8a8a;box-sizing:border-box;border-radius:2px;"></div>
<span class="t" style="left:952.0px;top:631.0px;font-size:12px;line-height:16px;color:#8c8c8c;letter-spacing:-0.526px;">16:00:00</span>
<div class="a" style="left:1015.5px;top:629.5px;width:15.5px;height:8px;background:#f1f1f1;border:1px solid #e4e4e4;box-sizing:border-box;"></div>
<div class="a" style="left:1015.5px;top:638px;width:15.5px;height:8px;background:#f1f1f1;border:1px solid #e4e4e4;box-sizing:border-box;"></div>
<svg class="a" style="left:1020.5px;top:632px;" width="5" height="3" viewBox="0 0 5 3"><path d="M0 3 H5 L2.500 0.300 Z" fill="#555"/></svg>
<svg class="a" style="left:1020.5px;top:640.5px;" width="5" height="3" viewBox="0 0 5 3"><path d="M0 0 H5 L2.500 2.700 Z" fill="#555"/></svg>
<svg class="a" style="left:645.5px;top:676.5px;" width="20" height="20" viewBox="0 0 20 20"><rect x="0.500" y="0.500" width="19" height="19" rx="3.500" fill="#fbfbfb" stroke="#d4d4d4"/><circle cx="10" cy="10" r="7.800" fill="#3f6db8"/><circle cx="10" cy="10" r="6.600" fill="none" stroke="#5f8ad0" stroke-width="0.800"/><text x="10" y="14.500" text-anchor="middle" font-family="Liberation Sans" font-weight="bold" font-size="12.500" fill="#fff">?</text></svg>
<div class="a" style="left:1121px;top:676.5px;width:73px;height:20px;background:#fdfdfd;border:1px solid #2468b0;box-sizing:border-box;border-radius:4px;box-shadow:inset 0 0 0 1px #d6e8f8;"></div>
<span class="t" style="left:1149.8px;top:679.0px;font-size:12px;line-height:16px;color:#1a1a1a;letter-spacing:-0.919px;">OK</span>
<div class="a" style="left:1202px;top:676.5px;width:73px;height:20px;background:#fdfdfd;border:1px solid #d0d0d0;box-sizing:border-box;border-radius:4px;"></div>
<span class="t" style="left:1210.0px;top:679.0px;font-size:12px;line-height:16px;color:#1a1a1a;letter-spacing:-0.171px;">Abbrechen</span>
<div class="a" style="left:828px;top:475px;width:100.5px;height:100.5px;border-radius:50%;background:radial-gradient(circle closest-side, rgba(240,242,0,0.590) 0, rgba(242,243,0,0.570) 78%, rgba(244,244,20,0.500) 90%, rgba(244,244,60,0.28) 96%, rgba(246,246,80,0) 100%);"></div>
<svg class="a" style="left:877px;top:523.5px;" width="27" height="40" viewBox="0 0 27 40"><path d="M1.500 1.800 V31.500 L8.600 24.800 L13.800 36.800 L18.600 34.600 L13.400 23 H23.800 Z" fill="#fff" stroke="#000" stroke-width="1.200" stroke-linejoin="miter"/></svg>
</div>
</body></html>
